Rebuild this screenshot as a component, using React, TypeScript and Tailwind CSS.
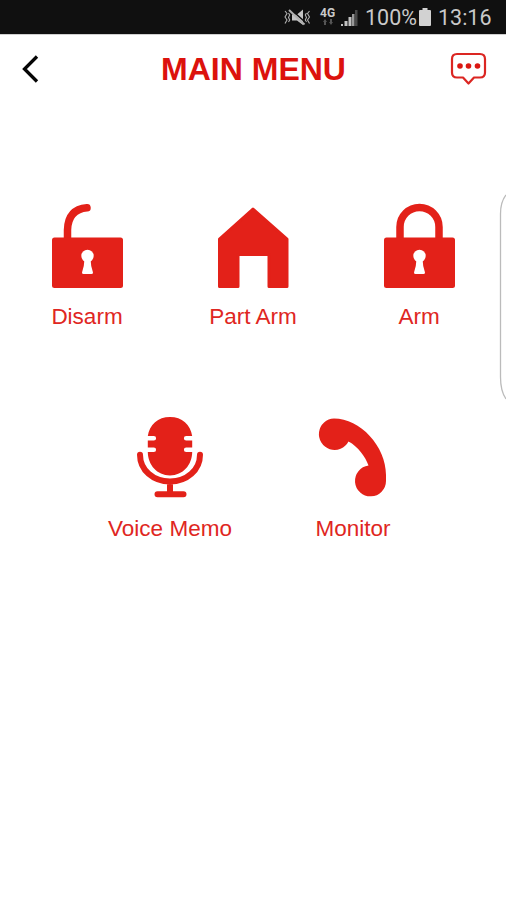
import type { ReactNode } from 'react';

const RED = '#e32119';

function Padlock({ open = false }: { open?: boolean }) {
  return (
    <svg className="h-[86px] w-[72px]" viewBox="0 0 72 86" fill={RED}>
      <path
        d={open ? 'M16.5 38V27Q17 6.500 36 4.800' : 'M17 38V24A19.5 19.5 0 0 1 56 24V38'}
        fill="none"
        stroke={RED}
        strokeWidth="7.5"
        strokeLinecap="round"
      />
      <rect x="1" y="34.5" width="71" height="50.5" rx="2.5" />
      <circle cx="36.5" cy="53" r="6.2" fill="#fff" />
      <path d="M33.5 56h6q.3 8 2.500 13.500 0 1.500-1.500 1.500h-8q-1.500 0-1.500-1.500Q33.200 64 33.500 56Z" fill="#fff" />
    </svg>
  );
}

function House() {
  return (
    <svg className="h-[86px] w-[72px]" viewBox="0 0 72 86" fill={RED} stroke={RED} strokeWidth="3" strokeLinejoin="round">
      <path d="M36 6L70 36V83.500H52V51.500H21V83.500H2.500V36Z" />
    </svg>
  );
}

function Microphone() {
  return (
    <svg className="h-[86px] w-[72px]" viewBox="0 0 72 86" fill={RED}>
      <path d="M13.800 21C15.500 9.500 24 2 36 2S56.500 9.500 58.200 21H52.200a2.300 2.300 0 0 0 0 4.600H58.200V32.500H52.200a2.300 2.300 0 0 0 0 4.600H58.200C58 50 49 60.500 36 60.500S14 50 13.800 37.100h6a2.300 2.300 0 0 0 0-4.600H13.800V25.600h6a2.300 2.300 0 0 0 0-4.600Z" />
      <path d="M6 39.800C6 55 19 66.500 36 66.500S66 55 66 39.800M36 66.500V79M23.500 79.300H49.500" fill="none" stroke={RED} strokeWidth="6" strokeLinecap="round" />
    </svg>
  );
}

function Handset() {
  return (
    <svg className="h-[86px] w-[72px]" viewBox="0 0 72 86" fill={RED}>
      <path d="M17 3.500C43 3.500 69 31 69 60V66A15.500 15.500 0 1 1 51.500 50.500C48.500 42 41 31.500 31.500 26.500A15.700 15.700 0 1 1 17 3.500Z" />
    </svg>
  );
}

function MenuItem({ label, children }: { label: string; children: ReactNode }) {
  return (
    <button className="flex w-[166px] flex-col items-center">
      {children}
      <span className="mt-[12px] text-[22.500px] leading-[32px] whitespace-nowrap text-[#df2622]">{label}</span>
    </button>
  );
}

function StatusBar() {
  return (
    <div className="flex h-[34px] items-center bg-[#101010] pr-[14px] pl-[284px] font-['Roboto',sans-serif] text-[22px] text-[#c9c9c9]">
      <svg className="h-[20px] w-[27px] shrink-0" viewBox="0 0 27 20" fill="none" stroke="#b0b0b0" strokeWidth="1.500">
        <path d="M1 4l2 2.500-2 3.500 2 3-2 3.500M4.500 6l1.200 2-1.200 2.500 1.200 2.500-1.200 2M25.500 4l-2 2.500 2 3.500-2 3 2 3.500M22.500 6l-1.200 2 1.200 2.500-1.200 2.500 1.200 2" strokeWidth="1.100" />
        <path d="M8 7.500h5l6-5v15.500l-6-4.500H8Z" fill="#c4c4c4" stroke="none" />
        <path d="M7 2.500l14 12.500" stroke="#101010" strokeWidth="1.600" />
        <path d="M5 3l15.500 14.500" strokeWidth="2" />
      </svg>
      <div className="ml-[9px] flex h-[20px] w-[16px] shrink-0 flex-col">
        <span className="text-[12px] leading-[12px] font-bold">4G</span>
        <svg className="ml-[3px] h-[7px] w-[10px]" viewBox="0 0 10 7" fill="#555">
          <path d="M0 3l2-3 2 3H3v3H1V3ZM6 3h1V0h2v3h1L8 6Z" />
        </svg>
      </div>
      <svg className="ml-[4px] h-[20px] w-[19px] shrink-0" viewBox="0 0 19 20">
        <path d="M1 17h2v2H1ZM4.500 14h3v5h-3ZM8.500 10h3v9h-3Z" fill="#c2c2c2" />
        <path d="M12 7h2.500v12H12Z" fill="#999" />
        <path d="M15 3h2.500v16H15Z" fill="#484848" />
      </svg>
      <span className="ml-[6px] w-[52px] pt-[2px] text-[21.500px] leading-[30px]">100%</span>
      <svg className="ml-[2px] h-[18px] w-[12px] shrink-0" viewBox="0 0 12 18" fill="#d2d2d2">
        <path d="M3.500 0h5v2H11q1 0 1 1v14q0 1-1 1H1q-1 0-1-1V3q0-1 1-1h2.500Z" />
      </svg>
      <span className="ml-[7px] pt-[2px] text-[21.500px] leading-[30px]">13:16</span>
    </div>
  );
}

export default function App() {
  return (
    <main className="relative h-[900px] w-[506px] overflow-hidden bg-white font-['Liberation_Sans',Arial,sans-serif]">
      <StatusBar />
      <header className="flex h-[68px] items-center justify-between border-t border-[#d0d0d0] pr-[19px] pl-[20px]">
        <svg className="h-[28px] w-[37px]" viewBox="0 0 37 28" fill="none" stroke="#050505" strokeWidth="3.300">
          <path d="M17 1.500L4.500 14L17 26.500" />
        </svg>
        <h1 className="text-[32px] leading-[40px] font-bold whitespace-nowrap text-[#dc120d]">MAIN MENU</h1>
        <svg className="h-[34px] w-[37px]" viewBox="0 0 37 34" fill="none" stroke="#db2622" strokeWidth="2.200" strokeLinejoin="round">
          <path d="M7 2H30Q35 2 35 7V20.500Q35 25.500 30 25.500H24L18.500 31.500L13 25.500H7Q2 25.500 2 20.500V7Q2 2 7 2Z" />
          <g fill="#db1712" stroke="none">
            <circle cx="10" cy="14" r="2.800" />
            <circle cx="18.500" cy="14" r="2.800" />
            <circle cx="27.500" cy="14" r="2.800" />
          </g>
        </svg>
      </header>
      <section className="mt-[101px] flex pl-[4px]">
        <MenuItem label="Disarm"><Padlock open /></MenuItem>
        <MenuItem label="Part Arm"><House /></MenuItem>
        <MenuItem label="Arm"><Padlock /></MenuItem>
      </section>
      <section className="mt-[82px] flex gap-[17px] pl-[87px]">
        <MenuItem label="Voice Memo"><Microphone /></MenuItem>
        <MenuItem label="Monitor"><Handset /></MenuItem>
      </section>
      <svg className="absolute top-[192px] right-0 h-[210px] w-[7px]" viewBox="0 0 7 210" fill="none" stroke="#bbb" strokeWidth="1.300">
        <path d="M7 3Q1.500 10 1.500 22V185Q1.500 199 7 207" />
      </svg>
    </main>
  );
}
